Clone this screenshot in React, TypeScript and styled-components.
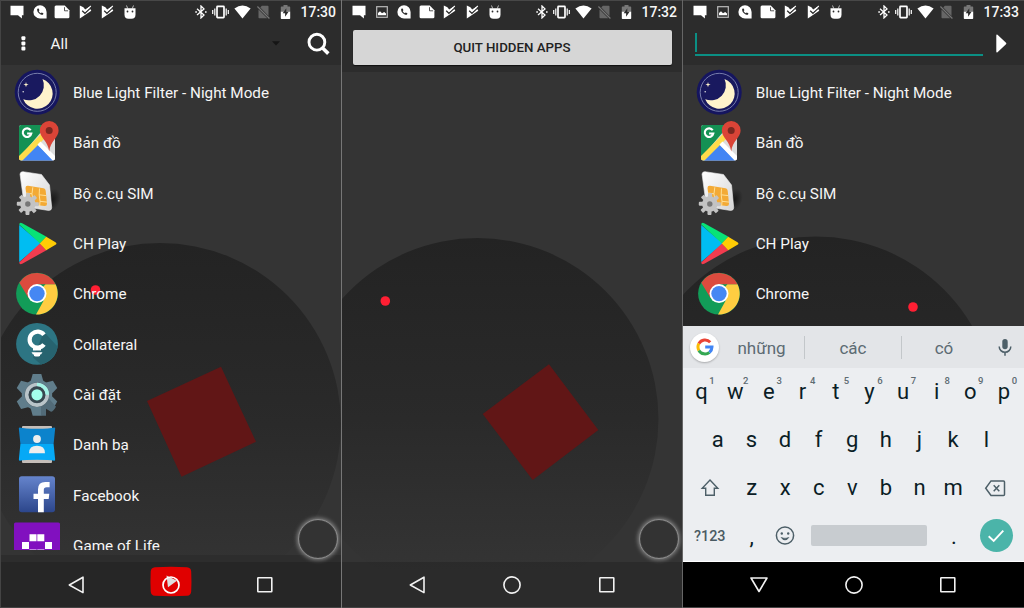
import React from "react";
import styled, { createGlobalStyle } from "styled-components";

const Global = createGlobalStyle`
  * { box-sizing: border-box; }
  body { margin: 0; background: #343434; font-family: Roboto, "Noto Sans", sans-serif; }
  svg { display: block; flex: none; }
`;

const Screens = styled.div`
  display: grid;
  grid-template-columns: 341px 341px 342px;
  width: 1024px;
  height: 608px;
  overflow: hidden;
`;

const Phone = styled.section<{ $edge: string }>`
  position: relative;
  display: flex;
  flex-direction: column;
  height: 608px;
  overflow: hidden;
  color: #f6f6f6;
  background: #343434;
  border-left: 1px solid ${(p) => p.$edge};
`;

const Backdrop = styled.svg`
  position: absolute;
  top: 0;
  left: -1px;
`;

const Header = styled.header<{ $height: number; $shift: number }>`
  position: relative;
  flex: none;
  height: ${(p) => p.$height}px;
  padding-left: ${(p) => p.$shift}px;
  background: #2c2c2c;
  border-top: 1px solid #484848;
`;

const StatusBar = styled.div`
  display: flex;
  align-items: center;
  height: 22px;
  padding-left: 5px;
`;

const Slot = styled.span<{ $width?: number }>`
  display: flex;
  justify-content: center;
  flex: none;
  width: ${(p) => p.$width ?? 22.6}px;
`;

const SystemIcons = styled.div<{ $end: number }>`
  display: flex;
  align-items: center;
  margin-left: auto;
  margin-right: ${(p) => p.$end}px;
`;

const Clock = styled.time`
  width: 41px;
  padding-left: 3.5px;
  font-size: 14px;
  font-weight: 500;
  line-height: 22px;
`;

const Toolbar = styled.div`
  display: flex;
  align-items: center;
  height: 41px;
  padding: 0 9px 0 19.5px;
`;

const FilterName = styled.span`
  flex: 1;
  padding-left: 25px;
  font-size: 15.3px;
  line-height: 20px;
`;

const SearchSlot = styled.span`
  padding-left: 26px;
`;

const SearchBar = styled.div`
  display: flex;
  align-items: center;
  height: 41px;
  padding: 0 17px 0 11px;
  gap: 13.5px;
`;

const SearchField = styled.div`
  flex: 1;
  height: 23px;
  margin-top: 1px;
  border-bottom: 2px solid #0b8f84;
  &::before {
    content: "";
    display: block;
    width: 2px;
    height: 19px;
    background: #0b8f84;
  }
`;

const QuitButton = styled.button`
  display: block;
  width: 319px;
  height: 35px;
  margin: 7px 0 0 9.5px;
  padding: 0;
  border: 0;
  border-radius: 2px;
  background: #d6d6d6;
  box-shadow: 0 1px 1px #111;
  color: #222;
  font: 500 13.3px/36px Roboto, sans-serif;
`;

const AppList = styled.ul<{ $height: number }>`
  position: relative;
  flex: none;
  height: ${(p) => p.$height}px;
  margin: 0;
  padding: 2.3px 0 0 11px;
  overflow: hidden;
  list-style: none;
`;

const AppRow = styled.li`
  display: flex;
  align-items: center;
  height: 50.35px;
  font-size: 15.25px;
`;

const AppIcon = styled.svg`
  width: 50px;
  height: 50px;
  overflow: visible;
`;

const AppName = styled.span<{ $shift: number }>`
  padding: 1px 0 0 ${(p) => 11 + p.$shift}px;
`;

const Spacer = styled.div`
  flex: 1;
`;

const DockEdge = styled.div`
  position: relative;
  height: 7px;
  background: #2d2d2d;
`;

const NavBar = styled.nav<{ $color: string; $end: number }>`
  position: relative;
  display: flex;
  flex: none;
  justify-content: center;
  align-items: center;
  height: 46px;
  padding-right: ${(p) => p.$end}px;
  background: ${(p) => p.$color};
  border-bottom: 1px solid #444;
`;

const NavItem = styled.span`
  display: flex;
  justify-content: center;
  width: 94.6px;
`;

const FloatButton = styled.div`
  position: absolute;
  left: 296.5px;
  top: 518.5px;
  width: 40px;
  height: 40px;
  border: 1px solid #8c8c8c;
  border-radius: 50%;
  background: #333;
  box-shadow: 0 0 4px 1px #858585, inset 0 0 1px #888;
`;

const Keyboard = styled.div`
  position: relative;
  flex: none;
  height: 236px;
  background: #eceef1;
  border-bottom: 1px solid #fff;
  color: #0b1d26;
`;

const Suggestions = styled.div`
  display: flex;
  align-items: center;
  height: 42px;
  padding: 0 11px 0 7px;
  background: #e3e5e8;
  color: #5c6b73;
  font-size: 17px;
`;

const GoogleBadge = styled.span`
  display: grid;
  place-items: center;
  width: 29px;
  height: 29px;
  border-radius: 50%;
  background: #fff;
  box-shadow: 0 1px 2px rgba(0, 0, 0, 0.25);
`;

const Suggestion = styled.span<{ $width: number }>`
  width: ${(p) => p.$width}px;
  height: 23px;
  line-height: 24px;
  text-align: center;
  & + & {
    border-left: 1px solid #c3c7ca;
  }
`;

const KeyRow = styled.div<{ $inset?: number }>`
  display: flex;
  align-items: center;
  height: 48.2px;
  padding: 0 ${(p) => p.$inset ?? 1.8}px;
`;

const Key = styled.span<{ $width?: number }>`
  position: relative;
  display: flex;
  justify-content: center;
  flex: none;
  width: ${(p) => p.$width ?? 33.6}px;
  font-size: 22px;
  line-height: 26px;
`;

const Hint = styled.sup`
  position: absolute;
  left: 24.5px;
  top: -4px;
  color: #5d6b72;
  font-size: 9.5px;
  font-weight: 500;
  line-height: 11px;
`;

const SymbolKey = styled(Key)`
  color: #4a5a62;
  font-size: 14.4px;
  font-weight: 500;
`;

const SpaceKey = styled.span`
  width: 116px;
  height: 21.5px;
  margin: -2px 9.5px 0;
  border-radius: 2px;
  background: #c8ccd0;
`;

const EnterKey = styled.span`
  display: grid;
  place-items: center;
  width: 33px;
  height: 33px;
  margin-top: -2px;
  border-radius: 50%;
  background: #4bb4a9;
`;

type Pt = [number, number];

const Wallpaper = ({ id, center, square, dot }: { id: string; center: Pt; square?: string; dot: Pt }) => (
  <Backdrop width="342" height="608">
    <defs>
      <linearGradient id={id} x1="0" y1="0" x2="0" y2="1">
        <stop offset="0" stopColor="#232323" />
        <stop offset="0.5" stopColor="#2a2a2a" />
        <stop offset="0.92" stopColor="#343434" />
      </linearGradient>
    </defs>
    <circle cx={center[0]} cy={center[1]} r="181" fill={`url(#${id})`} />
    {square && <polygon points={square} fill="#611616" />}
    <circle cx={dot[0]} cy={dot[1]} r="4.8" fill="#ff1f33" />
  </Backdrop>
);

const Message = () => (
  <svg width="14" height="14" viewBox="0 0 14 14"><path d="M.5 .8h13v9.4h-1.6v3.2L8 10.2H.5z" fill="#fff" /></svg>
);
const Picture = () => (
  <svg width="12" height="12" viewBox="0 0 12 12">
    <rect x=".7" y=".7" width="10.6" height="10.6" fill="none" stroke="#bbb" strokeWidth="1.2" />
    <path d="M2 9.3V7l2-1.8 2 2L8.2 6 10 7.4v1.9z" fill="#fff" />
  </svg>
);
const CallBubble = () => (
  <svg width="14" height="14" viewBox="0 0 14 14">
    <path d="M7 .3a6.6 6.6 0 0 1 6.6 6.6v6.6H7A6.6 6.6 0 0 1 7 .3z" fill="#fff" />
    <path d="M4.2 3.8c-.6 3 2.4 6.3 5.8 6l.4-1.5-1.7-.8-.9.7C6.8 7.7 6 6.9 5.7 6l.7-.8-.7-1.7z" fill="#2c2c2c" />
  </svg>
);
const Note = () => (
  <svg width="16" height="14" viewBox="0 0 16 14">
    <path d="M2 .5h8.8l4.6 4.8v6.7q0 1.200-1.400 1.200H2Q.6 13.200.6 12V2Q.6.5 2 .5z" fill="#fff" />
    <path d="M10.5 2.200v3.600h3.600" fill="none" stroke="#2c2c2c" strokeWidth=".8" />
  </svg>
);
const CheckPlay = () => (
  <svg width="13" height="14" viewBox="0 0 13 14">
    <path d="M.8 .4l3.600 1.900 1.800 2.200L10 2l2.300 3.800L.8 13.500z" fill="#fff" />
    <path d="M3.200 5.700l2.700 2.600 6.100-5.700" fill="none" stroke="#2c2c2c" strokeWidth="1.200" />
    <path d="M5.900 6.300L11.800 1" stroke="#fff" strokeWidth="1.100" />
  </svg>
);
const Droid = () => (
  <svg width="14" height="15" viewBox="0 0 14 15">
    <path d="M3.5.5l1.200 3M10.500.5l-1.200 3" stroke="#bbb" strokeWidth="1" />
    <path d="M1.500 3.200h11v6.500q0 4-4 4h-3q-4 0-4-4z" fill="#fff" />
    <circle cx="4.500" cy="6.500" r=".9" fill="#2c2c2c" /><circle cx="9.500" cy="6.500" r=".9" fill="#2c2c2c" />
  </svg>
);
const Bluetooth = () => (
  <svg width="12" height="14" viewBox="0 0 12 14" fill="none" stroke="#fff" strokeWidth="1.300">
    <path d="M2 3.800l7 6.200-3 2.900V1l3 2.900L2 10.100" />
    <path d="M.3 7h1.600M10 7h1.600" strokeWidth="1.600" />
  </svg>
);
const Vibrate = () => (
  <svg width="17" height="14" viewBox="0 0 17 14" fill="none" stroke="#fff">
    <rect x="5" y="1.300" width="7" height="11.400" rx=".6" strokeWidth="1.700" />
    <path d="M2.800 3.500v7M14.200 3.500v7M.7 5v4M16.300 5v4" strokeWidth="1.200" />
  </svg>
);
const Wifi = () => (
  <svg width="17" height="14" viewBox="0 0 17 14"><path d="M8.500 13.500L.4 3.500Q8.500-2.600 16.600 3.500z" fill="#fff" /></svg>
);
const NoSim = () => (
  <svg width="13" height="14" viewBox="0 0 13 14">
    <path d="M4.800.8h5.900q.8 0 .8.800v9.400L3.300 2.500zM1.500 4.500l8.800 8.800h-8q-.8 0-.8-.8z" fill="#666" />
    <path d="M.4 1.500l12 12" stroke="#777" strokeWidth="1.100" />
  </svg>
);
const Battery = () => (
  <svg width="11" height="14" viewBox="0 0 11 14">
    <path d="M3.500 0h4v1.500h2q.7 0 .7.700V7H.8V2.200q0-.7.7-.7h2z" fill="#777" />
    <path d="M.8 6.800h9.400v6.500q0 .7-.7.7h-8q-.7 0-.7-.7z" fill="#fff" />
    <path d="M6.300 3.200L2.700 8.300h2.400v3.500l3.500-5.100H6.300z" fill="#2c2c2c" />
  </svg>
);

const Status = ({ time, picture, end }: { time: string; picture?: boolean; end: number }) => (
  <StatusBar>
    <Slot><Message /></Slot>
    {picture && <Slot><Picture /></Slot>}
    <Slot><CallBubble /></Slot>
    <Slot><Note /></Slot>
    <Slot><CheckPlay /></Slot>
    <Slot><CheckPlay /></Slot>
    <Slot><Droid /></Slot>
    <SystemIcons $end={end}>
      <Slot $width={18}><Bluetooth /></Slot>
      <Slot $width={21}><Vibrate /></Slot>
      <Slot $width={23}><Wifi /></Slot>
      <Slot $width={19}><NoSim /></Slot>
      <Slot $width={24}><Battery /></Slot>
      <Clock>{time}</Clock>
    </SystemIcons>
  </StatusBar>
);

const Moon = () => (
  <AppIcon viewBox="0 0 50 50">
    <circle cx="25.200" cy="25.300" r="22.500" fill="#15155f" />
    <circle cx="25.200" cy="25.300" r="19" fill="#19195f" stroke="#777daa" strokeWidth="1" />
    <path d="M30.500 12a15.300 15.300 0 1 1-19.300 20.200A15 15 0 0 0 30.500 12z" fill="#fff3cc" />
    <path d="M14 15l.6 2 2 .6-2 .6-.6 2-.6-2-2-.6 2-.6z" fill="#fff3cc" />
    <circle cx="11.200" cy="24.800" r=".8" fill="#ddd" />
  </AppIcon>
);
const MapsIcon = ({ id }: { id: string }) => (
  <AppIcon viewBox="0 0 50 50">
    <clipPath id={id}><rect x="7" y="7" width="36" height="35.500" rx="2.500" /></clipPath>
    <g clipPath={`url(#${id})`}>
      <path d="M7 7h36v36H7z" fill="#dcdcdc" />
      <path d="M7 7h28L7 40z" fill="#149154" />
      <path d="M25 26.500L42 43H8z" fill="#4285f4" />
      <path d="M7 43v-5L30 15l3 5L10 43z" fill="#ffdc4a" />
      <path d="M25.500 26.500l3-3L44 39v5h-2z" fill="#fff" />
    </g>
    <path d="M37.200 33.500C36 23 27.800 19.500 27.800 12.500a9.400 9.400 0 0 1 18.800 0c0 7-8.300 10.500-9.400 21z" fill="#db4437" />
    <circle cx="37.200" cy="12.500" r="3.500" fill="#7b2820" />
    <path d="M18.700 12.300a4.300 4.300 0 1 0 .6 3.200h-4.200" fill="none" stroke="#fff" strokeWidth="2.100" />
  </AppIcon>
);

const teeth = [0, 45, 90, 135, 180, 225, 270, 315];

const SimIcon = ({ id }: { id: string }) => (
  <AppIcon viewBox="0 0 50 50">
    <defs>
      <linearGradient id={id} x2="1" y2="1"><stop stopColor="#fff" /><stop offset="1" stopColor="#d4d4d4" /></linearGradient>
      <radialGradient id={`${id}-shade`}><stop stopColor="#161616" /><stop offset="1" stopColor="#161616" stopOpacity="0" /></radialGradient>
    </defs>
    <ellipse cx="40" cy="32" rx="8" ry="12" fill={`url(#${id}-shade)`} transform="rotate(25 40 32)" />
    <path d="M8 6Q8.500 3.500 11 3.700L29.500 6.500 37.500 17l2.200 22.500q0 3-3 3L14.500 39q-2-.3-2.300-2.500z" fill={`url(#${id})`} stroke="#eee" strokeWidth=".6" />
    <path d="M13.500 20q0-2.500 2.500-2.200l15.500 2.500q2 .4 2.200 2.500l1.300 13q0 2.500-2.500 2.200l-14.500-1.800q-2.500-.4-2.800-2.700z" fill="#f3aa35" />
    <path d="M14 25l6 .8.8-6.500M14.800 31l6 1 .7 5M20 26l1 6M27.500 20.500l-.3 6.300 7 .8M27.200 26.800l.8 6.500 7 .8M28 33.300l-.4 5" fill="none" stroke="#ffe4a0" strokeWidth=".9" />
    <g transform="translate(15.800 36)" fill="#c3c3c3">
      {teeth.map((a) => <rect key={a} x="-2" y="-11" width="4" height="7" rx=".8" transform={`rotate(${a + 2})`} />)}
      <circle r="7.700" /><circle r="2.700" fill="#777" />
    </g>
  </AppIcon>
);
const PlayIcon = () => (
  <AppIcon viewBox="0 0 50 50">
    <path d="M7.200 6v37L29 24.600z" fill="#00bdf2" />
    <path d="M7.200 5.500q.3-2.500 3-1.200L34.500 17.700 28 24.500z" fill="#08e377" />
    <path d="M7.200 43.500q.3 2.500 3 1.200L34.500 31.200 28 24.400z" fill="#f23c4f" />
    <path d="M34.200 17.700l9.300 5.500q1.900 1.300 0 2.600L34.200 31.200 27.800 24.500z" fill="#ffcc05" />
  </AppIcon>
);
const ChromeIcon = () => (
  <AppIcon viewBox="0 0 50 50">
    <circle cx="25" cy="24.600" r="20.900" fill="#129c58" />
    <path d="M25 24.800L33.500 15.300H43.500A20.900 20.900 0 0 1 24 45.500L32 31z" fill="#ffcd41" />
    <path d="M25 15.300h18.500A20.900 20.900 0 0 0 7.300 13.700L16.500 29z" fill="#dc4b3e" />
    <circle cx="25" cy="24.600" r="9.500" fill="#fff" />
    <circle cx="25" cy="24.600" r="7.700" fill="#4587f3" />
  </AppIcon>
);
const CollateralIcon = () => (
  <AppIcon viewBox="0 0 50 50">
    <circle cx="25" cy="24.900" r="20.900" fill="#2d7583" />
    <path d="M32 13l13.500 14.500A21 21 0 0 1 29 45.400l-8-7z" fill="#27636f" />
    <path d="M32 15.800a8 8 0 1 0 0 9.700" fill="none" stroke="#fff" strokeWidth="4.200" />
    <path d="M21 27h8v4.500h-8zM19.500 33.300h11l-1.500 2.200h-1v1.600q-3 1-6 0v-1.600h-1z" fill="#fff" />
  </AppIcon>
);
const SettingsIcon = () => (
  <AppIcon viewBox="0 0 50 50">
    <g transform="translate(25 24.800)" fill="#607d8b">
      {[0, 60, 120, 180, 240, 300].map((a) => <path key={a} d="M-6.500-13l2.200-7.900h8.600L6.500-13z" transform={`rotate(${a})`} />)}
      <circle r="15.200" />
      <path d="M4 12L12 4l7 8q-3 5-5 5l-5-3v7H4z" fill="#526b78" />
      <circle r="12.300" fill="#4a5c66" />
      <circle r="10.300" fill="none" stroke="#b9c4c9" strokeWidth="3.600" />
      <path d="M0-10.300A10.300 10.300 0 0 1 10.300 0" fill="none" stroke="#a4f3e6" strokeWidth="3.600" />
      <circle r="8.300" fill="#37474f" />
      <circle r="5.600" fill="#a4ffeb" />
    </g>
  </AppIcon>
);
const ContactsIcon = () => (
  <AppIcon viewBox="0 0 50 50">
    <path d="M10 7q0-.9 1-.9h28q1 0 1 .9v35q0 1-1 1H11q-1 0-1-1z" fill="#c5beb9" />
    <path d="M7.500 7.500q5 1.300 17.500 1.300t17.500-1.300q1 0 .6 1.700L41.600 24H8.400L6.900 9.200Q6.500 7.500 7.500 7.500z" fill="#0c83cc" />
    <path d="M8.400 24h33.200l1.500 15.100q.3 1.700-.8 1.700-5-1-17.300-1T7.700 40.800q-1.100 0-.8-1.700z" fill="#06a9f6" />
    <circle cx="25" cy="19" r="3.900" fill="#eee" />
    <path d="M17 33.200q0-7.400 8-7.400t8 7.400z" fill="#eee" />
  </AppIcon>
);
const FacebookIcon = ({ id }: { id: string }) => (
  <AppIcon viewBox="0 0 50 50">
    <defs><linearGradient id={id} x2="0" y2="1"><stop stopColor="#6584cc" /><stop offset="1" stopColor="#2c468b" /></linearGradient></defs>
    <rect x="7" y="6.300" width="36" height="36" rx="2.800" fill={`url(#${id})`} />
    <path d="M26 42.300V29h-4.500v-5.300H26v-4.400q0-7.300 7.300-7.300h4.300v5.300h-3q-2.800 0-2.800 2.800v3.600h5.500l-.6 5.300h-4.900v13.300z" fill="#fff" />
  </AppIcon>
);
const LifeIcon = () => (
  <AppIcon viewBox="0 0 50 50">
    <rect x="2" y="1.500" width="46" height="46" rx="1.500" fill="#8110bf" />
    <path d="M17.500 13.200h7v7h-7zM25.300 13.200h7v7h-7zM10 21h7v7h-7zM33 21h7v7h-7zM17.500 28.400h7v7h-7zM25.300 28.400h7v7h-7z" fill="#fff" />
  </AppIcon>
);

const BackIcon = () => (
  <svg width="18" height="20" viewBox="0 0 18 20"><path d="M16 2.200v15.400L2.300 10z" fill="none" stroke="#f2f2f2" strokeWidth="1.600" strokeLinejoin="round" /></svg>
);
const HideKeyboardIcon = () => (
  <svg width="20" height="18" viewBox="0 0 20 18"><path d="M2 2h16l-8 13.500z" fill="none" stroke="#f2f2f2" strokeWidth="1.600" strokeLinejoin="round" /></svg>
);
const HomeIcon = () => (
  <svg width="20" height="20" viewBox="0 0 20 20"><circle cx="10" cy="10" r="8.100" fill="none" stroke="#f2f2f2" strokeWidth="1.600" /></svg>
);
const HomeBadge = () => (
  <svg width="42" height="42" viewBox="0 0 42 42">
    <path d="M5 3.200Q21 2.400 37 3.200q4 .3 4.200 4.300.5 10 0 20-.3 4-4.200 4.300-16 .9-32 0Q1 31.500.7 27.500q-.5-10 0-20Q1 3.500 5 3.200z" fill="#e00000" />
    <path d="M16.500 11.500L27 16.800l-9 6.500z" fill="#ddd" />
    <circle cx="21" cy="21" r="8" fill="none" stroke="#fff" strokeWidth="1.700" />
  </svg>
);
const RecentsIcon = () => (
  <svg width="18" height="18" viewBox="0 0 18 18"><rect x="1.800" y="1.800" width="14" height="14" rx=".5" fill="none" stroke="#f2f2f2" strokeWidth="1.600" /></svg>
);

const GoogleG = () => (
  <svg width="18" height="18" viewBox="0 0 18 18" fill="none" strokeWidth="3">
    <path d="M14.200 4.200A7 7 0 0 0 2.900 5.600" stroke="#ea4335" />
    <path d="M2.900 5.600a7 7 0 0 0 0 6.800" stroke="#fbbc05" />
    <path d="M2.900 12.400a7 7 0 0 0 10.600 1.900" stroke="#34a853" />
    <path d="M13.500 14.300A7 7 0 0 0 16 9H9.200" stroke="#4285f4" />
  </svg>
);
const Mic = () => (
  <svg width="16" height="19" viewBox="0 0 16 19">
    <rect x="5.300" y="1" width="5.400" height="10.300" rx="2.700" fill="#4d5f68" />
    <path d="M2.200 8.500a5.800 5.800 0 0 0 11.600 0M8 14.300v3.400" fill="none" stroke="#4d5f68" strokeWidth="1.500" />
  </svg>
);
const Shift = () => (
  <svg width="20" height="20" viewBox="0 0 20 20"><path d="M10 2l7.800 8.300h-3.500v7H5.700v-7H2.200z" fill="none" stroke="#4d5f68" strokeWidth="1.400" /></svg>
);
const Backspace = () => (
  <svg width="22" height="18" viewBox="0 0 22 18" fill="none" stroke="#4d5f68" strokeWidth="1.500">
    <path d="M7 1.900h12.500q1 0 1 1v12.600q0 1-1 1H7L1.700 9.200z" /><path d="M9.700 6.200l5.600 6m0-6l-5.600 6" />
  </svg>
);
const Smile = () => (
  <svg width="20" height="24" viewBox="0 0 20 24" fill="none" stroke="#4d5f68" strokeWidth="1.500">
    <circle cx="10" cy="10.500" r="8.600" /><path d="M5.500 12.200q4.500 6 9 0z" fill="#4d5f68" stroke="none" />
    <path d="M7 12.200h6q-3 2.300-6 0z" fill="#eceef1" stroke="none" />
    <circle cx="6.800" cy="8.500" r="1.200" fill="#4d5f68" stroke="none" /><circle cx="13.200" cy="8.500" r="1.200" fill="#4d5f68" stroke="none" />
  </svg>
);
const Check = () => (
  <svg width="18" height="14" viewBox="0 0 18 14"><path d="M1.700 7.200l5 4.800L16.300 1.700" fill="none" stroke="#fff" strokeWidth="1.900" /></svg>
);
const Overflow = () => (
  <svg width="5" height="16" viewBox="0 0 5 16" fill="#fff">
    <rect x=".4" y=".2" width="4" height="4" rx="1.100" /><rect x=".4" y="5.400" width="4" height="4" rx="1.100" /><rect x=".4" y="10.600" width="4" height="4" rx="1.100" />
  </svg>
);
const Caret = () => (
  <svg width="8" height="5" viewBox="0 0 8 5"><path d="M0 .3h8L4 4.500z" fill="#151515" /></svg>
);
const Search = () => (
  <svg width="26" height="24" viewBox="0 0 26 24" fill="none" stroke="#fff">
    <circle cx="10.900" cy="10.200" r="7.900" strokeWidth="2.900" /><path d="M16.800 16.300l5.500 5.300" strokeWidth="3.600" />
  </svg>
);
const Forward = () => (
  <svg width="11" height="19" viewBox="0 0 11 19"><path d="M.3 1.500Q.3.2 1.500.8L10 8.800q.8.700 0 1.400L1.500 18.200q-1.200.6-1.200-.7z" fill="#fff" /></svg>
);

const Apps = ({ scope, height, count, shift = 0 }: { scope: string; height: number; count: number; shift?: number }) => {
  const apps: [string, React.ReactNode][] = [
    ["Blue Light Filter - Night Mode", <Moon />],
    ["Bản đồ", <MapsIcon id={`${scope}-map`} />],
    ["Bộ c.cụ SIM", <SimIcon id={`${scope}-sim`} />],
    ["CH Play", <PlayIcon />],
    ["Chrome", <ChromeIcon />],
    ["Collateral", <CollateralIcon />],
    ["Cài đặt", <SettingsIcon />],
    ["Danh bạ", <ContactsIcon />],
    ["Facebook", <FacebookIcon id={`${scope}-fb`} />],
    ["Game of Life", <LifeIcon />],
  ];
  return (
    <AppList $height={height}>
      {apps.slice(0, count).map(([name, icon]) => (
        <AppRow key={name}>{icon}<AppName $shift={shift}>{name}</AppName></AppRow>
      ))}
    </AppList>
  );
};

const firstRow = "qwertyuiop".split("");

export default function App() {
  return (
    <>
      <Global />
      <Screens>
        <Phone $edge="#444">
          <Wallpaper id="disc-a" center={[160, 424]} square="147,401 221,366.700 256,441.700 181.500,476.700" dot={[95.5, 290]} />
          <Header $height={65} $shift={0}>
            <Status time="17:30" end={3} />
            <Toolbar>
              <Overflow />
              <FilterName>All</FilterName>
              <Caret />
              <SearchSlot><Search /></SearchSlot>
            </Toolbar>
          </Header>
          <Apps scope="a" height={485} count={10} />
          <Spacer />
          <DockEdge />
          <NavBar $color="#262626" $end={1}>
            <NavItem><BackIcon /></NavItem>
            <NavItem><HomeBadge /></NavItem>
            <NavItem><RecentsIcon /></NavItem>
          </NavBar>
          <FloatButton />
        </Phone>

        <Phone $edge="#777">
          <Wallpaper id="disc-b" center={[136.5, 419]} square="141.700,414 208,364.300 257.300,430 191.700,480" dot={[44.3, 301]} />
          <Header $height={72} $shift={1}>
            <Status time="17:32" picture end={3} />
            <QuitButton>QUIT HIDDEN APPS</QuitButton>
          </Header>
          <Spacer />
          <NavBar $color="rgba(38, 38, 38, 0.65)" $end={0}>
            <NavItem><BackIcon /></NavItem>
            <NavItem><HomeIcon /></NavItem>
            <NavItem><RecentsIcon /></NavItem>
          </NavBar>
          <FloatButton />
        </Phone>

        <Phone $edge="#666">
          <Wallpaper id="disc-c" center={[134, 417.5]} dot={[231, 307]} />
          <Header $height={65} $shift={1}>
            <Status time="17:33" picture end={3} />
            <SearchBar>
              <SearchField />
              <Forward />
            </SearchBar>
          </Header>
          <Apps scope="c" height={261} count={5} shift={0.7} />
          <Keyboard>
            <Suggestions>
              <GoogleBadge><GoogleG /></GoogleBadge>
              <Suggestion $width={85}>những</Suggestion>
              <Suggestion $width={97}>các</Suggestion>
              <Suggestion $width={85}>có</Suggestion>
              <Spacer />
              <Mic />
            </Suggestions>
            <KeyRow>
              {firstRow.map((letter, i) => (
                <Key key={letter}>{letter}<Hint>{(i + 1) % 10}</Hint></Key>
              ))}
            </KeyRow>
            <KeyRow $inset={18}>
              {"asdfghjkl".split("").map((letter) => <Key key={letter}>{letter}</Key>)}
            </KeyRow>
            <KeyRow>
              <Key $width={50}><Shift /></Key>
              {"zxcvbnm".split("").map((letter) => <Key key={letter}>{letter}</Key>)}
              <Key $width={51}><Backspace /></Key>
            </KeyRow>
            <KeyRow>
              <SymbolKey $width={50}>?123</SymbolKey>
              <Key>,</Key>
              <Key><Smile /></Key>
              <SpaceKey />
              <Key>.</Key>
              <Key $width={51}><EnterKey><Check /></EnterKey></Key>
            </KeyRow>
          </Keyboard>
          <NavBar $color="#000" $end={0}>
            <NavItem><HideKeyboardIcon /></NavItem>
            <NavItem><HomeIcon /></NavItem>
            <NavItem><RecentsIcon /></NavItem>
          </NavBar>
        </Phone>
      </Screens>
    </>
  );
}
